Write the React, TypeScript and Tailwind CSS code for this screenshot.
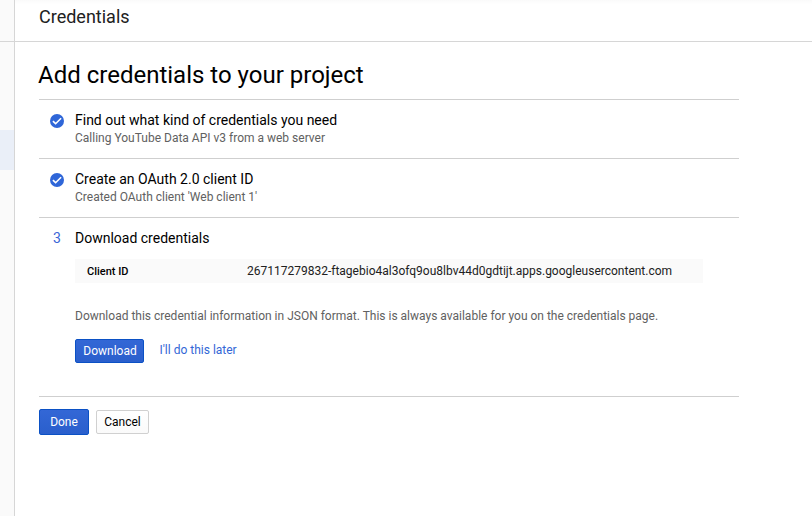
export default function App() {
  return (
    <div className="flex h-[516px] w-[812px] overflow-hidden bg-white font-[Roboto,sans-serif] text-[#111]">
      <aside className="w-[15px] shrink-0 border-r border-[#d6d6d6] bg-[#fafafa]">
        <div className="h-[42px] border-b border-[#d6d6d6]" />
        <div className="mt-[88px] h-10 bg-[#eaeff8]" />
      </aside>
      <main className="flex-1">
        <header className="h-[42px] border-b border-[#d6d6d6] bg-linear-to-b from-[#fafafa] to-white to-10% pl-6">
          <h1 className="pt-[5px] text-[18px] leading-[24px] text-[#212121]">Credentials</h1>
        </header>
        <section className="ml-6 w-[700px]">
          <h2 className="-ml-px h-[57px] pt-[17px] text-[24px] leading-[32px] text-black">Add credentials to your project</h2>
          <Step title="Find out what kind of credentials you need" detail="Calling YouTube Data API v3 from a web server" />
          <Step title="Create an OAuth 2.0 client ID" detail="Created OAuth client 'Web client 1'" />
          <div className="h-[179px] border-t border-[#cfcfcf] pt-[10px]">
            <div className="flex text-[14px] leading-[20px]">
              <span className="w-9 pl-[14px] text-[#3b66d6]">3</span>
              <span className="text-black">Download credentials</span>
            </div>
            <div className="ml-9 mt-[11px] flex h-6 w-[628px] items-center bg-[#fafafa] text-[12px] text-[#212121]">
              <span className="w-[172px] pl-3 pt-[2px] text-[11px] leading-[16px] font-medium text-black">Client ID</span>
              <span>267117279832-ftagebio4al3ofq9ou8lbv44d0gdtijt.apps.googleusercontent.com</span>
            </div>
            <p className="ml-9 mt-[25px] text-[12px] leading-[16px] text-[#616161]">Download this credential information in JSON format. This is always available for you on the credentials page.</p>
            <div className="ml-9 mt-[15px] flex">
              <button className="h-6 w-[69px] rounded-[2px] border border-[#0b51c5] bg-linear-to-b from-[#3367d6] to-[#2a5fcc] pl-px text-[12px] leading-[22px] text-white">Download</button>
              <a className="ml-[15.5px] text-[12px] leading-[22px] text-[#3367d6]">I'll do this later</a>
            </div>
          </div>
          <footer className="flex gap-[7px] border-t border-[#cfcfcf] pt-3">
            <button className="h-[26px] w-[50px] rounded-[2px] border border-[#0b51c5] bg-linear-to-b from-[#3367d6] to-[#2a5fcc] text-[12px] text-white">Done</button>
            <button className="mt-px h-6 w-[53px] rounded-[2px] border border-[#d0d0d0] bg-linear-to-b from-white to-[#fafafa] text-[12px] text-black">Cancel</button>
          </footer>
        </section>
      </main>
    </div>
  );
}

function Step({ title, detail }: { title: string; detail: string }) {
  return (
    <div className="flex h-[59px] border-t border-[#cfcfcf] pt-[10px]">
      <svg className="ml-[11px] mt-1 mr-[11px] size-[14px] shrink-0" viewBox="0 0 14 14">
        <circle cx="7" cy="7" r="7" fill="#2f66d8" />
        <path d="M2.9 7.1 5.6 9.7l5.5-5.5" fill="none" stroke="white" strokeWidth="1.6" />
      </svg>
      <div>
        <h3 className="text-[14px] leading-[20px] text-black">{title}</h3>
        <p className="text-[12px] leading-[16px] text-[#616161]">{detail}</p>
      </div>
    </div>
  );
}
